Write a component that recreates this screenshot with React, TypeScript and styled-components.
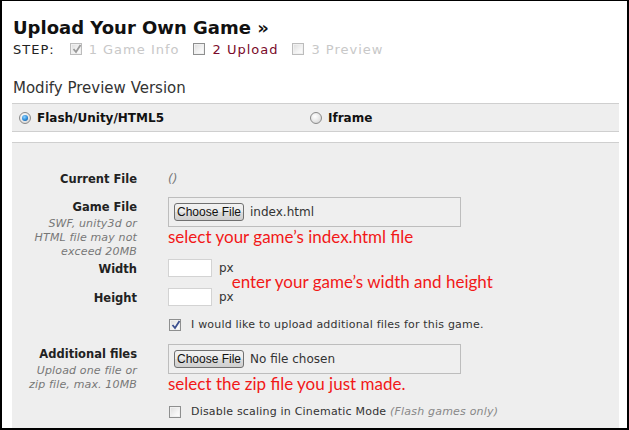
import React from "react";
import styled, { createGlobalStyle } from "styled-components";

const Global = createGlobalStyle`
  html, body { margin: 0; padding: 0; background: #fff; }
  body { font-family: "DejaVu Sans", Verdana, sans-serif; }
  * { box-sizing: border-box; }
`;

const Frame = styled.div`
  width: 629px;
  height: 430px;
  border-style: solid;
  border-color: #000;
  border-width: 1px 2px 2px 2px;
  padding: 16px 8px 0 10px;
  overflow: hidden;
  background: #fff;
`;

const Title = styled.h1`
  margin: 0 0 0 1px;
  font-family: "DejaVu Sans", Verdana, sans-serif;
  font-weight: bold;
  font-size: 18px;
  line-height: 22px;
  color: #111;
`;

const Steps = styled.div`
  display: flex;
  align-items: center;
  margin: 0 0 0 1px;
  height: 20px;
  font-size: 13px;
  letter-spacing: 1px;
  color: #222;
`;

const StepLabel = styled.span`
  margin-right: 15px;
`;

const Step = styled.span<{ $tone: "done" | "current" | "future" }>`
  display: inline-flex;
  align-items: center;
  gap: 7px;
  margin-right: 14px;
  color: ${(p) => (p.$tone === "current" ? "#7a0a2a" : "#c8c8c8")};
`;

const Box = styled.span<{ $disabled?: boolean }>`
  position: relative;
  display: inline-block;
  width: 12px;
  height: 12px;
  border: 1px solid ${(p) => (p.$disabled ? "#bcbcbc" : "#8e8f8f")};
  background: linear-gradient(135deg, #dcdcdc 0%, #f4f4f4 60%, #fff 100%);
  box-shadow: inset 0 0 0 1px #f0f0f0;
  flex: none;
`;

const Tick = styled.svg`
  position: absolute;
  left: 1px;
  top: 0px;
`;

const Subtitle = styled.div`
  margin: 20px 0 0 1px;
  font-size: 15px;
  line-height: 18px;
  color: #333;
`;

const RadioBar = styled.div`
  margin-top: 6px;
  height: 29px;
  display: grid;
  grid-template-columns: 291px 1fr;
  align-items: center;
  padding-left: 7px;
  background: #eee;
  border-top: 1px solid #cfcfcf;
  border-bottom: 1px solid #cfcfcf;
`;

const RadioOpt = styled.label`
  display: flex;
  align-items: center;
  gap: 6px;
  font-weight: bold;
  font-size: 12px;
  color: #111;
`;

const Radio = styled.span<{ $on?: boolean }>`
  position: relative;
  display: inline-block;
  width: 12px;
  height: 12px;
  border-radius: 50%;
  border: 1px solid #8a8a8a;
  background: radial-gradient(circle at 40% 35%, #fff 0%, #e6e6e6 55%, #c9c9c9 100%);
  &::after {
    content: "";
    display: ${(p) => (p.$on ? "block" : "none")};
    position: absolute;
    left: 2px;
    top: 2px;
    width: 6px;
    height: 6px;
    border-radius: 50%;
    background: radial-gradient(circle at 40% 35%, #8fd3ff 0%, #2b8ad8 55%, #0b3f7a 100%);
  }
`;

const Panel = styled.div`
  margin-top: 10px;
  background: #eee;
  border-top: 1px solid #cfcfcf;
  padding: 28px 0 40px 0;
`;

const Row = styled.div<{ $top?: number }>`
  display: grid;
  grid-template-columns: 125px 1fr;
  column-gap: 31px;
  margin-top: ${(p) => p.$top ?? 0}px;
`;

const LabelCol = styled.div<{ $pad?: number }>`
  text-align: right;
  padding-top: ${(p) => p.$pad ?? 0}px;
`;

const Label = styled.div`
  font-weight: bold;
  font-size: 11.5px;
  line-height: 16px;
  color: #222;
`;

const Hint = styled.div`
  margin-top: 2px;
  font-style: italic;
  font-size: 11px;
  letter-spacing: 0.15px;
  line-height: 14px;
  color: #777;
`;

const Muted = styled.div`
  font-style: italic;
  font-size: 12px;
  line-height: 16px;
  color: #777;
`;

const FileBox = styled.div`
  width: 293px;
  height: 30px;
  display: flex;
  align-items: center;
  gap: 6px;
  padding-left: 5px;
  border: 1px solid #bdbdbd;
  background: #efefef;
  font-size: 12px;
  color: #333;
`;

const ChooseButton = styled.button`
  height: 18px;
  width: 70px;
  padding: 0;
  border: 1px solid #707070;
  border-radius: 3px;
  background: linear-gradient(#f2f2f2 0%, #ebebeb 50%, #dddddd 51%, #cfcfcf 100%);
  font-family: "Liberation Sans", Arial, sans-serif;
  font-size: 12px;
  color: #111;
`;

const Note = styled.div`
  font-family: Lato, "Open Sans", sans-serif;
  font-size: 17px;
  line-height: 20px;
  color: #f21818;
`;

const DimGrid = styled.div`
  display: grid;
  grid-template-columns: 125px auto 1fr;
  grid-template-rows: 29px 29px;
`;

const DimLabel = styled.div`
  text-align: right;
  padding-top: 2px;
`;

const DimField = styled.div`
  display: flex;
  align-items: flex-start;
  gap: 7px;
  margin-left: 31px;
  font-size: 12px;
  color: #333;
`;

const SmallInput = styled.span`
  display: inline-block;
  width: 44px;
  height: 18px;
  background: #fff;
  border: 1px solid #d3d3d3;
`;

const Px = styled.span`
  line-height: 18px;
`;

const DimNote = styled(Note)`
  grid-column: 3;
  grid-row: 1 / span 2;
  align-self: start;
  margin: 13px 0 0 -2px;
`;

const CheckRow = styled.div<{ $top?: number }>`
  display: flex;
  align-items: center;
  gap: 10px;
  margin: ${(p) => p.$top ?? 0}px 0 0 157px;
  font-size: 11px;
  letter-spacing: 0.2px;
  color: #333;
`;

const Aside = styled.span`
  font-style: italic;
  color: #888;
`;

function Check({ checked, disabled }: { checked?: boolean; disabled?: boolean }) {
  return (
    <Box $disabled={disabled}>
      {checked && (
        <Tick width="10" height="10" viewBox="0 0 10 10">
          <path
            d="M1.5 5 L4 8 L8.5 1"
            fill="none"
            stroke={disabled ? "#9a9a9a" : "#3b4f8f"}
            strokeWidth="1.8"
          />
        </Tick>
      )}
    </Box>
  );
}

export default function App() {
  return (
    <>
      <Global />
      <Frame>
        <Title>Upload Your Own Game »</Title>
        <Steps>
          <StepLabel>STEP:</StepLabel>
          <Step $tone="done">
            <Check checked disabled />1 Game Info
          </Step>
          <Step $tone="current">
            <Check />2 Upload
          </Step>
          <Step $tone="future">
            <Check disabled />3 Preview
          </Step>
        </Steps>
        <Subtitle>Modify Preview Version</Subtitle>
        <RadioBar>
          <RadioOpt>
            <Radio $on />
            Flash/Unity/HTML5
          </RadioOpt>
          <RadioOpt>
            <Radio />
            Iframe
          </RadioOpt>
        </RadioBar>
        <Panel>
          <Row>
            <LabelCol>
              <Label>Current File</Label>
            </LabelCol>
            <Muted>()</Muted>
          </Row>
          <Row $top={10}>
            <LabelCol $pad={2}>
              <Label>Game File</Label>
              <Hint>
                SWF, unity3d or
                <br />
                HTML file may not
                <br />
                exceed 20MB
              </Hint>
            </LabelCol>
            <div>
              <FileBox>
                <ChooseButton>Choose File</ChooseButton>
                index.html
              </FileBox>
              <Note>select your game’s index.html file</Note>
            </div>
          </Row>
          <DimGrid>
            <DimLabel>
              <Label>Width</Label>
            </DimLabel>
            <DimField>
              <SmallInput />
              <Px>px</Px>
            </DimField>
            <DimNote>enter your game’s width and height</DimNote>
            <DimLabel>
              <Label>Height</Label>
            </DimLabel>
            <DimField>
              <SmallInput />
              <Px>px</Px>
            </DimField>
          </DimGrid>
          <CheckRow $top={1}>
            <Check checked />
            I would like to upload additional files for this game.
          </CheckRow>
          <Row $top={13}>
            <LabelCol $pad={2}>
              <Label>Additional files</Label>
              <Hint>
                Upload one file or
                <br />
                zip file, max. 10MB
              </Hint>
            </LabelCol>
            <div>
              <FileBox>
                <ChooseButton>Choose File</ChooseButton>
                No file chosen
              </FileBox>
              <Note>select the zip file you just made.</Note>
            </div>
          </Row>
          <CheckRow $top={11}>
            <Check />
            <span>
              Disable scaling in Cinematic Mode <Aside>(Flash games only)</Aside>
            </span>
          </CheckRow>
        </Panel>
      </Frame>
    </>
  );
}
